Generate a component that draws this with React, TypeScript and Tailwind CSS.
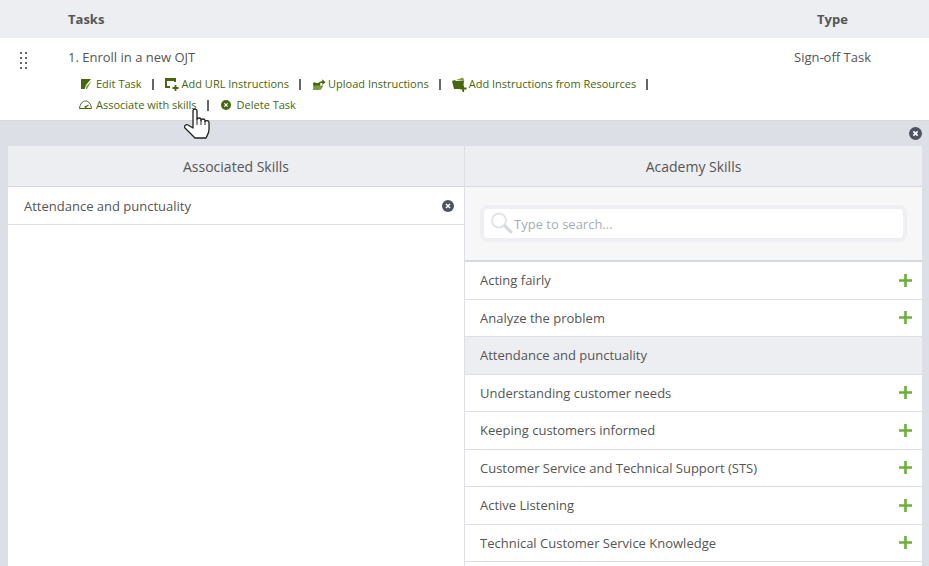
import { Fragment } from 'react';

const skills = [
  { name: 'Acting fairly', added: false },
  { name: 'Analyze the problem', added: false },
  { name: 'Attendance and punctuality', added: true },
  { name: 'Understanding customer needs', added: false },
  { name: 'Keeping customers informed', added: false },
  { name: 'Customer Service and Technical Support (STS)', added: false },
  { name: 'Active Listening', added: false },
  { name: 'Technical Customer Service Knowledge', added: false },
  { name: '', added: false },
];

function EditIcon() {
  return (
    <svg width="14" height="12" viewBox="0 0 14 12" className="shrink-0">
      <path d="M1 1h10L6 7l-1 3-.500 1H1z" fill="#47660f" />
      <path d="M11.500 3L7 11H5.800l.700-3z" fill="#7f9a3c" />
    </svg>
  );
}

function UrlIcon() {
  return (
    <svg width="15" height="14" viewBox="0 0 15 14" className="shrink-0">
      <path d="M0 1h11v4H8v2H5v4H0z" fill="#47660f" />
      <rect x="2" y="4" width="7" height="5" fill="#ffffff" />
      <path d="M7.500 11h6M10.500 8v6" stroke="#47660f" strokeWidth="1.800" />
    </svg>
  );
}

function UploadIcon() {
  return (
    <svg width="14" height="13" viewBox="0 0 15 13" className="shrink-0">
      <path d="M1 5l2-1 1.500 1H9l-1 7H2z" fill="#47660f" />
      <path d="M3 7.500h9.500l-3 4.500H0.500z" fill="#7f9a3c" />
      <path d="M6 6.500c.500-2 2.500-3.500 5-3.500V1l3.500 3L11 7V5c-2 0-3.500.500-5 1.500z" fill="#47660f" />
    </svg>
  );
}

function ResourceIcon() {
  return (
    <svg width="15" height="15" viewBox="0 0 15 15" className="shrink-0">
      <path d="M0 4l3-1 1 1h8l-1 8H2z" fill="#47660f" />
      <path d="M4 3l7-2.500L12.500 4z" fill="#7f9a3c" />
      <path d="M8 11.500h6.500M11.200 8.500v6.500" stroke="#47660f" strokeWidth="1.800" />
    </svg>
  );
}

function GaugeIcon() {
  return (
    <svg width="15" height="10" viewBox="0 0 15 10" className="shrink-0" fill="none">
      <path d="M0.500 8.500C1 4 3.500 1 6.500 1s5.500 3 6 7.500z" stroke="#47660f" strokeWidth="1" />
      <path d="M6.500 7l3-2" stroke="#47660f" strokeWidth="1.200" />
      <circle cx="6.500" cy="7" r="1" fill="#47660f" />
    </svg>
  );
}

function CircleX({ size, fill }: { size: number; fill: string }) {
  return (
    <svg width={size} height={size} viewBox="0 0 12 12" className="shrink-0">
      <circle cx="6" cy="6" r="6" fill={fill} />
      <path d="M4 4l4 4M8 4l-4 4" stroke="#ffffff" strokeWidth="1.500" />
    </svg>
  );
}

function Plus() {
  return (
    <svg width="13" height="13" viewBox="0 0 13 13" className="shrink-0">
      <path d="M0 6.500h13M6.500 0v13" stroke="#6cae3a" strokeWidth="2.600" />
    </svg>
  );
}

function Action({ icon, label }: { icon: React.ReactNode; label: string }) {
  return (
    <span className="mr-[10px] flex items-center gap-[2px] text-[11px] leading-[16px] text-[#47660f]">
      {icon}
      {label}
    </span>
  );
}

function Sep() {
  return <span className="mr-[11px] h-[11px] w-[2px] bg-[#666]" />;
}

export default function App() {
  const row1 = [
    { icon: <EditIcon />, label: 'Edit Task' },
    { icon: <UrlIcon />, label: 'Add URL Instructions' },
    { icon: <UploadIcon />, label: 'Upload Instructions' },
    { icon: <ResourceIcon />, label: 'Add Instructions from Resources' },
  ];

  return (
    <div className="relative h-[566px] w-[929px] overflow-hidden bg-[#dcdfe6] font-['Open_Sans',sans-serif] text-[#555]">
      <div className="flex h-[38px] items-center bg-[#edeef2] pt-[1px] text-[13px] font-bold">
        <span className="ml-[68px] w-[749px]">Tasks</span>
        <span>Type</span>
      </div>

      <div className="flex h-[83px] border-b border-[#d5d8de] bg-white">
        <div className="h-[18px] w-[68px] shrink-0 pt-[14px] pl-[20px]">
          <div className="grid w-[7px] grid-cols-2 gap-x-[3px] gap-y-[3px]">
            {[0, 1, 2, 3, 4, 5, 6, 7].map((i) => (
              <span key={i} className="h-[2px] w-[2px] bg-[#666]" />
            ))}
          </div>
        </div>
        <div className="w-[726px] pt-[10px]">
          <div className="text-[13px] leading-[18px]">1. Enroll in a new OJT</div>
          <div className="mt-[10px] flex items-center pl-[12px]">
            {row1.map((a) => (
              <Fragment key={a.label}>
                <Action icon={a.icon} label={a.label} />
                <Sep />
              </Fragment>
            ))}
          </div>
          <div className="mt-[5px] flex items-center pl-[11px]">
            <Action icon={<GaugeIcon />} label="Associate with skills" />
            <Sep />
            <span className="ml-[1px]">
              <Action
                icon={
                  <span className="mr-[4px]">
                    <CircleX size={10} fill="#47660f" />
                  </span>
                }
                label="Delete Task"
              />
            </span>
          </div>
        </div>
        <div className="pt-[10px] text-[13px] leading-[18px]">Sign-off Task</div>
      </div>

      <div className="flex h-[25px] items-center justify-end pr-[7px]">
        <CircleX size={13} fill="#4d5361" />
      </div>

      <div className="mx-[8px] flex h-[420px] w-[914px] bg-white">
        <div className="w-[457px] shrink-0 border-r border-[#dcdfe6]">
          <div className="flex h-[41px] items-center justify-center border-b border-[#d5d8de] bg-[#edeef2] text-[14px]">
            Associated Skills
          </div>
          <div className="flex h-[38px] items-center justify-between border-b border-[#dcdfe6] pr-[10px] pl-[16px] text-[13px]">
            <span className="pt-[2px]">Attendance and punctuality</span>
            <CircleX size={12} fill="#4d5361" />
          </div>
        </div>
        <div className="flex-1">
          <div className="flex h-[41px] items-center justify-center border-b border-[#d5d8de] bg-[#edeef2] text-[14px]">
            Academy Skills
          </div>
          <div className="h-[75px] border-b-2 border-[#d5d8de] bg-[#f7f7f8] px-[15px] py-[18px]">
            <div className="flex h-[37px] items-center rounded-[8px] border-4 border-[#eeeff2] bg-white pl-[6px]">
              <svg width="24" height="24" viewBox="0 0 24 24" fill="none" className="-mt-[2px] shrink-0">
                <circle cx="9" cy="9.500" r="7" stroke="#e2e4e8" strokeWidth="2" />
                <path d="M15 15l6 6" stroke="#d5d8de" strokeWidth="3" strokeLinecap="round" />
              </svg>
              <span className="pt-[2px] text-[13px] text-[#a9adb5]">Type to search...</span>
            </div>
          </div>
          {skills.map((s, i) => (
            <div
              key={i}
              className={`flex h-[37.5px] items-center justify-between border-b border-[#dcdfe6] pr-[10px] pl-[15px] text-[13px] ${s.added ? 'bg-[#edeef2]' : 'bg-white'}`}
            >
              <span className="pt-[1px]">{s.name}</span>
              {!s.added && s.name !== '' && <Plus />}
            </div>
          ))}
        </div>
      </div>

      <svg width="27" height="33" viewBox="0 0 27 33" className="absolute top-[108px] left-[184px]">
        <path
          d="M9 3c0-2.500 4-2.500 4 0v8.500c0-2 4-2 4 0v1c0-2 4-2 4 0v1c.5-1.500 4-1 4 1v7c0 4-2 6-3 8.500H11L6 25 1 20c-1.500-2 1-4 3-3l5 3z"
          fill="#ffffff"
          stroke="#222222"
          strokeWidth="1.300"
          strokeLinejoin="round"
        />
        <path d="M13 11.500V17M17 12v5M21 13v4" stroke="#222222" strokeWidth="1" />
      </svg>
    </div>
  );
}
